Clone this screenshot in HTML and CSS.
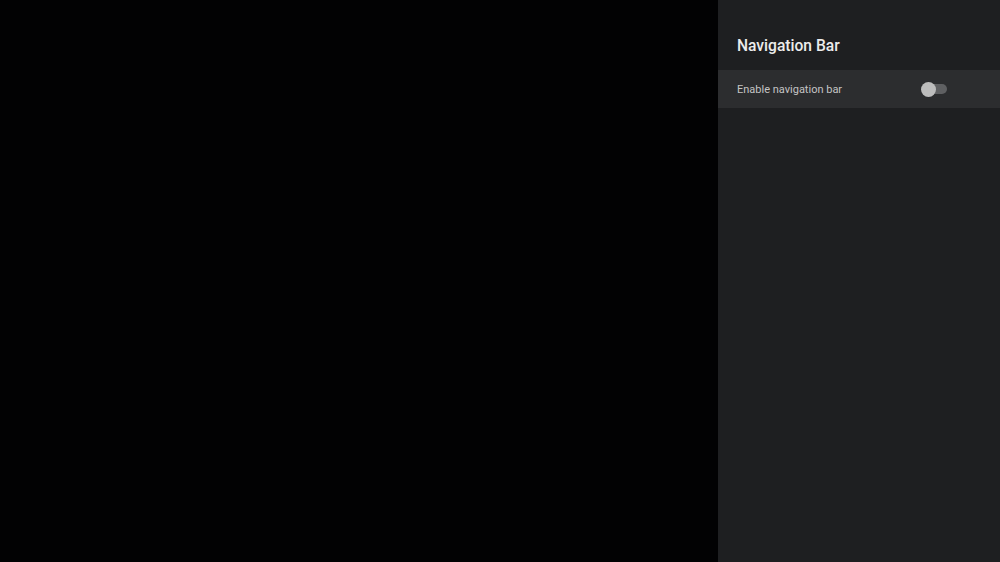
FILE: index.html
```html
<!DOCTYPE html>
<html lang="en">
<head>
  <meta charset="UTF-8">
  <title>Navigation Bar</title>
  <link rel="stylesheet" href="styles.css">
</head>
<body>
  <div class="screen">
    <div class="backdrop"></div>

    <!-- settings side panel -->
    <div class="panel">
      <h2 class="panel-title">Navigation Bar</h2>
      <div class="setting-row">
        <span class="setting-label">Enable navigation bar</span>
        <div class="toggle">
          <div class="toggle-track"></div>
          <div class="toggle-thumb"></div>
        </div>
      </div>
    </div>
  </div>
</body>
</html>
```

FILE: styles.css
```css
* {
  margin: 0;
  padding: 0;
  box-sizing: border-box;
}
body {
  font-family: Roboto, 'Liberation Sans', sans-serif;
  background-color: #020202;
  color: white;
  width: 1000px;
  height: 562px;
  overflow: hidden;
}
.screen {
  display: flex;
  height: 562px;
}
.backdrop {
  flex: 1;
  background-color: #020203;
}
.panel {
  width: 282px;
  background-color: #1e1f21;
}
.panel-title {
  font-size: 15.6px;
  font-weight: 500;
  color: #ececec;
  padding: 36px 19px 0;
  line-height: 20px;
  height: 70px;
}
.setting-row {
  display: flex;
  align-items: center;
  justify-content: space-between;
  height: 38px;
  padding: 0 53px 0 19px;
  background-color: #2c2d2f;
}
.setting-label {
  font-size: 11px;
  color: #c4c4c4;
}
.toggle {
  position: relative;
  width: 26px;
  height: 14px;
}
.toggle-track {
  position: absolute;
  left: 5px;
  top: 2px;
  width: 21px;
  height: 10px;
  border-radius: 5px;
  background-color: #5f6062;
}
.toggle-thumb {
  position: absolute;
  left: 0;
  top: -0.5px;
  width: 15px;
  height: 15px;
  border-radius: 50%;
  background-color: #bdbdbd;
}
```
